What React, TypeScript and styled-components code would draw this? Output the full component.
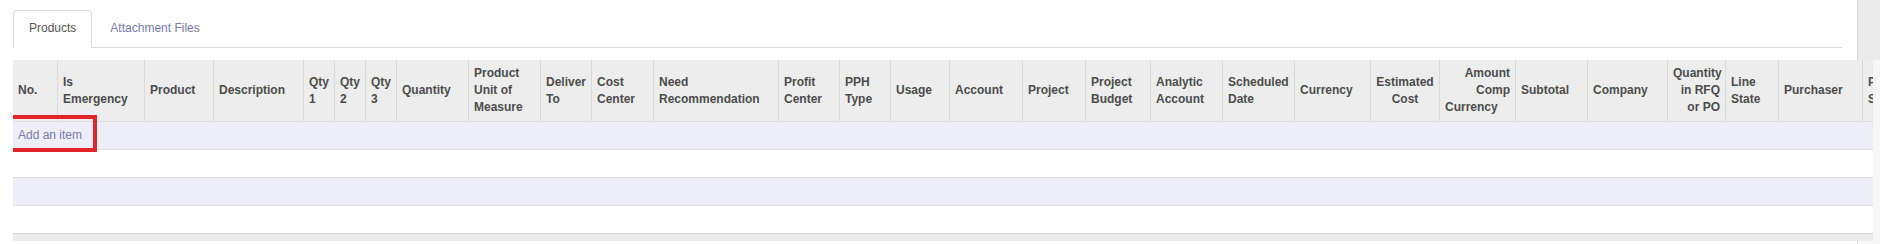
import React from "react";
import styled, { createGlobalStyle } from "styled-components";

const GlobalStyle = createGlobalStyle`
  html, body {
    margin: 0;
    padding: 0;
    width: 1880px;
    height: 244px;
    overflow: hidden;
  }
  body {
    font-family: "Liberation Sans", Arial, Helvetica, sans-serif;
    font-size: 12px;
    line-height: 17px;
    color: #4c4c4c;
    background: linear-gradient(to bottom, #ebebeb 0, #ebebeb 60px, #f7f7f7 60px, #f7f7f7 100%);
  }
`;

const Sheet = styled.div`
  box-sizing: border-box;
  width: 1858px;
  height: 244px;
  background: #ffffff;
  border-right: 1px solid #d4d4d4;
  padding: 10px 15px 0 13px;
`;

const TabList = styled.ul`
  display: flex;
  list-style: none;
  margin: 0;
  padding: 0;
  border-bottom: 1px solid #dddddd;
`;

const Tab = styled.li<{ $active?: boolean }>`
  margin: 0 2px -1px 0;
  padding: 9px 15px 10px;
  line-height: 17px;
  font-size: 12px;
  border: 1px solid ${(p) => (p.$active ? "#dddddd" : "transparent")};
  border-bottom-color: ${(p) => (p.$active ? "#ffffff" : "transparent")};
  border-radius: 4px 4px 0 0;
  background: ${(p) => (p.$active ? "#ffffff" : "transparent")};
  color: ${(p) => (p.$active ? "#555555" : "#7c7bad")};
  cursor: pointer;
`;

const TableWrap = styled.div`
  width: 1860px;
  margin-top: 12px;
  overflow: hidden;
  background: #ffffff;
`;

const Table = styled.table`
  table-layout: fixed;
  border-collapse: separate;
  border-spacing: 0;
  width: 1929px;
`;

const Col = styled.col<{ $w: number }>`
  width: ${(p) => p.$w}px;
`;

const HeadCell = styled.th<{ $align?: string; $lastLeft?: boolean; $first?: boolean }>`
  background: #ededed;
  padding: 5px;
  line-height: 17px;
  font-size: 12px;
  font-weight: bold;
  color: #4c4c4c;
  vertical-align: middle;
  text-align: ${(p) => p.$align || "left"};
  text-align-last: ${(p) => (p.$lastLeft ? "left" : "auto")};
  border-left: ${(p) => (p.$first ? "none" : "1px solid #d9d9d9")};
  overflow: hidden;
`;

const BodyRow = styled.tr<{ $striped?: boolean }>`
  background: ${(p) => (p.$striped ? "#eeeef8" : "#ffffff")};
`;

const BodyCell = styled.td`
  padding: 5px;
  line-height: 17px;
  font-size: 12px;
  border-top: 1px solid #dedede;
`;

const AddItem = styled.a`
  position: relative;
  display: inline-block;
  color: #7c7bad;
  text-decoration: none;
  cursor: pointer;

  &::after {
    content: "";
    position: absolute;
    top: -12px;
    bottom: -8px;
    left: -9px;
    right: -15px;
    border: 4px solid #e1232a;
    pointer-events: none;
  }
`;

const FootCell = styled.td`
  padding: 0;
  height: 7px;
  font-size: 0;
  line-height: 0;
  background: #ececec;
  border-top: 1px solid #d4d4d4;
`;

type Column = { label: string; w: number; align?: string; lastLeft?: boolean };

const columns: Column[] = [
  { label: "No.", w: 44 },
  { label: "Is Emergency", w: 87 },
  { label: "Product", w: 69 },
  { label: "Description", w: 90 },
  { label: "Qty 1", w: 31 },
  { label: "Qty 2", w: 31 },
  { label: "Qty 3", w: 31 },
  { label: "Quantity", w: 72 },
  { label: "Product Unit of Measure", w: 72 },
  { label: "Deliver To", w: 51 },
  { label: "Cost Center", w: 62 },
  { label: "Need Recommendation", w: 125 },
  { label: "Profit Center", w: 61 },
  { label: "PPH Type", w: 51 },
  { label: "Usage", w: 59 },
  { label: "Account", w: 73 },
  { label: "Project", w: 63 },
  { label: "Project Budget", w: 65 },
  { label: "Analytic Account", w: 72 },
  { label: "Scheduled Date", w: 72 },
  { label: "Currency", w: 76 },
  { label: "Estimated Cost", w: 69, align: "center" },
  { label: "Amount Comp Currency", w: 76, align: "right", lastLeft: true },
  { label: "Subtotal", w: 72 },
  { label: "Company", w: 80 },
  { label: "Quantity in RFQ or PO", w: 58, align: "right" },
  { label: "Line State", w: 53 },
  { label: "Purchaser", w: 84 },
  { label: "Purchase State", w: 80 },
];

export default function App() {
  const span = columns.length;
  return (
    <>
      <GlobalStyle />
      <Sheet>
        <TabList>
          <Tab $active>Products</Tab>
          <Tab>Attachment Files</Tab>
        </TabList>
        <TableWrap>
          <Table>
            <colgroup>
              {columns.map((c) => (
                <Col key={c.label} $w={c.w} />
              ))}
            </colgroup>
            <thead>
              <tr>
                {columns.map((c, i) => (
                  <HeadCell key={c.label} $align={c.align} $lastLeft={c.lastLeft} $first={i === 0}>
                    {c.label}
                  </HeadCell>
                ))}
              </tr>
            </thead>
            <tbody>
              <BodyRow $striped>
                <BodyCell colSpan={span}>
                  <AddItem>Add an item</AddItem>
                </BodyCell>
              </BodyRow>
              <BodyRow>
                <BodyCell colSpan={span}>{"\u00a0"}</BodyCell>
              </BodyRow>
              <BodyRow $striped>
                <BodyCell colSpan={span}>{"\u00a0"}</BodyCell>
              </BodyRow>
              <BodyRow>
                <BodyCell colSpan={span}>{"\u00a0"}</BodyCell>
              </BodyRow>
            </tbody>
            <tfoot>
              <tr>
                <FootCell colSpan={span} />
              </tr>
            </tfoot>
          </Table>
        </TableWrap>
      </Sheet>
    </>
  );
}
